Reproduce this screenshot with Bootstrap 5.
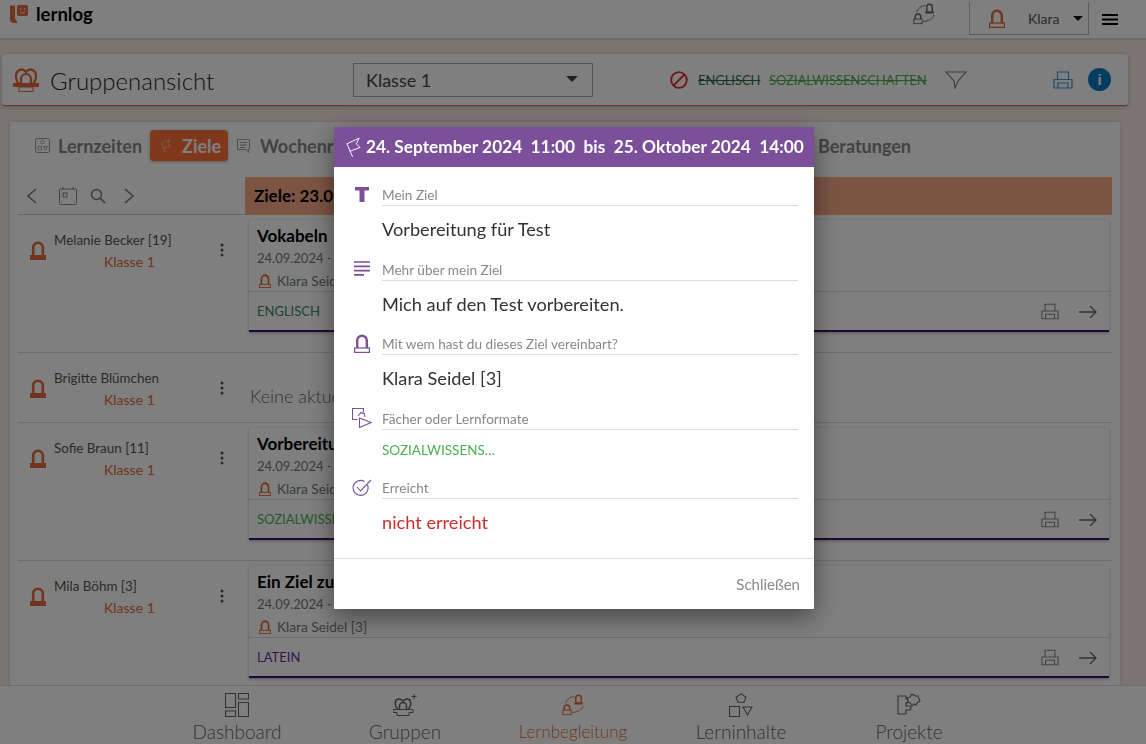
<!DOCTYPE html>
<html lang="de">
<head>
  <meta charset="utf-8">
  <title>lernlog</title>
  <link rel="stylesheet" href="https://cdn.jsdelivr.net/npm/bootstrap@5.3.0/dist/css/bootstrap.min.css">
  <style>
    html, body { height: 100%; overflow: hidden; }
    body { background: #f5e9e5; font-family: "Lato", "Liberation Sans", sans-serif; font-size: 14px; color: #666; }
    svg { display: block; flex: none; }

    .top-bar { height: 40px; background: #fff; border-bottom: 2px solid #d8d8d8; padding: 0 28px 0 10px; }
    .logo-word { font-size: 18.5px; font-weight: 700; color: #000; margin-left: 8px; margin-top: -9px; }
    .logo-mark { color: #e2683a; margin-top: -10px; }
    .user-box { width: 120px; height: 33px; margin: -1px 13px 0 33px; border: 1px solid #bbb; border-top: 0; padding: 0 6px 0 19px; }
    .user-box span { margin-left: 23px; margin-right: 14px; font-size: 14px; color: #555; }
    .tri { width: 0; height: 0; border-left: 5px solid transparent; border-right: 5px solid transparent; border-top: 5px solid #111; }
    .text-orange { color: #e2683a; }

    .head-card { margin: 14px 18px 0 2px; height: 52px; background: #fff; border-bottom: 1px solid #e2683a; border-radius: 3px; box-shadow: 0 1px 4px rgba(0,0,0,.25); padding-left: 11px; }
    .head-title { font-size: 24px; font-weight: 300; color: #222; margin-left: 11px; width: 303px; white-space: nowrap; padding-top: 2px; }
    .sel-box { width: 240px; height: 34px; border: 1px solid #aaa; padding: 2px 14px 0 12px; font-size: 18px; color: #444; margin-right: 77px; }
    .sel-box .tri { border-left-width: 6px; border-right-width: 6px; border-top-width: 6px; border-top-color: #444; margin-top: -3px; }
    .strike-en { color: #2c6b4f; text-decoration: line-through; font-size: 12.9px; margin: 0 9px 0 10px; width: 62px; white-space: nowrap; padding-top: 2px; }
    .strike-so { color: #4caf50; text-decoration: line-through; font-size: 12.9px; margin-right: 19px; width: 157px; white-space: nowrap; padding-top: 2px; }
    .text-blueish { color: #3b9ad6; }
    .info-dot { width: 23px; height: 23px; border-radius: 50%; background: #0a7ac4; color: #fff; font: 700 15px/23px "Liberation Sans", sans-serif; text-align: center; margin-left: 15px; }

    .main-card { margin: 16px 26px 0 10px; background: #fff; padding: 0 8px; box-shadow: 0 0 3px rgba(0,0,0,.15); }
    .tab-line { height: 55px; padding: 8px 0 0 17px; font-size: 18px; font-weight: 700; color: #858585; }
    .tab-line span { padding-top: 2px; }
    .tab-ziele { background: #ff7038; color: #fff; border-radius: 4px; height: 31px; width: 78px; margin: 0 9px 0 8px; padding-left: 11px; box-shadow: 0 1px 3px rgba(0,0,0,.3); }
    .tab-ziele svg { margin-right: 11px; }
    .tab-gap { margin-left: 10px; white-space: nowrap; }
    .tab-last { margin-left: 456px; white-space: nowrap; }

    .left-col { width: 227px; flex: none; }
    .date-tools { height: 38px; border-bottom: 1px solid #ccc; color: #777; padding-left: 8px; }
    .goal-bar { height: 38px; flex: 1; background: #f8a987; color: #000; font-size: 17px; font-weight: 700; padding-left: 9px; }

    .person-line { border-bottom: 1px solid #ddd; }
    .person-side { padding: 15px 0 0 12px; position: relative; }
    .person-icon { margin-top: 11px; }
    .person-side .p-name { font-size: 13.4px; color: #555; margin-left: 8px; white-space: nowrap; }
    .person-side .p-class { font-size: 14px; color: #e2683a; margin: 1px 0 0 58px; }
    .dots { position: absolute; left: 202px; top: 28px; color: #555; }
    .no-goal { font-size: 18px; color: #666; font-weight: 300; padding: 30px 0 0 5px; height: 69px; }

    .goal-card { width: 860px; height: 112px; margin: 5px 0 20px 4px; background: #fff; box-shadow: 0 1px 3px rgba(0,0,0,.3); border-bottom: 2px solid #400f70; }
    .goal-top { height: 72px; padding: 6px 8px 0; border-bottom: 1px solid #ddd; }
    .goal-title { font-size: 17px; font-weight: 700; color: #000; line-height: 20px; white-space: nowrap; }
    .goal-date { font-size: 13px; color: #777; line-height: 20px; margin-top: 2px; white-space: nowrap; }
    .goal-who { font-size: 13.7px; color: #777; line-height: 20px; margin-top: 3px; }
    .goal-who svg { margin: 0 6px 0 2px; color: #e2683a; }
    .goal-foot { height: 38px; padding: 1px 12px 0 8px; font-size: 13px; }
    .sub-en { color: #3a8a6c; }
    .sub-so { color: #4caf50; }
    .sub-la { color: #6a2fa0; }
    .foot-icons { color: #888; gap: 20px; }
    .foot-icons .arrow { color: #666; }

    .bottom-bar { height: 59px; background: #fff; border-top: 1px solid #ddd; overflow: hidden; padding-left: 153px; }
    .bottom-item { width: 168px; color: #666; font-size: 19px; font-weight: 300; padding-top: 7px; line-height: 26px; }
    .bottom-item svg { margin-bottom: 2px; }
    .bottom-item.active { color: #e2683a; font-size: 17px; }

    .goal-dialog { width: 480px; max-width: 480px; margin: 127px 0 0 334px; }
    .goal-content { border: 0; border-radius: 0; box-shadow: 0 8px 24px rgba(0,0,0,.45); height: 482px; }
    .goal-head { background: #7b4f9a; color: #fff; height: 40px; padding: 0 9px 0 12px; font-size: 17.3px; font-weight: 700; white-space: pre; }
    .goal-head svg { margin-right: 5px; }
    .field-wrap { padding: 18px 16px 0 18px; height: 391px; }
    .field { height: 74.5px; }
    .field.short { height: 69px; }
    .field-top { color: #7b4f9a; }
    .field-icon { width: 30px; flex: none; }
    .field-label { flex: 1; font-size: 13.6px; color: #888; border-bottom: 1px solid #ddd; line-height: 20px; height: 21px; }
    .field-value { padding: 10px 0 0 30px; font-size: 18.2px; color: #333; line-height: 26px; }
    .val-green { font-size: 13.5px; color: #4caf50; padding-top: 7px; }
    .val-red { color: #c9302c; }
    .goal-foot-bar { border-top: 1px solid #ddd; height: 51px; padding-right: 14px; color: #888; font-size: 15px; }
  </style>
</head>
<body>
  <svg width="0" height="0" class="position-absolute">
    <symbol id="person" viewBox="0 0 16 19">
      <path d="M3.200 14V6.500a4.800 4.800 0 0 1 9.600 0V14" fill="none" stroke="currentColor" stroke-width="2.600"/>
      <rect x="0" y="14" width="16" height="5" fill="currentColor"/>
    </symbol>
    <symbol id="person-line" viewBox="0 0 16 19">
      <path d="M3.200 14V6.500a4.800 4.800 0 0 1 9.600 0V14" fill="none" stroke="currentColor" stroke-width="2.400"/>
      <rect x=".6" y="14" width="14.800" height="4.400" fill="none" stroke="currentColor" stroke-width="1.200"/>
    </symbol>
    <symbol id="printer" viewBox="0 0 20 18">
      <path d="M4.500 8V1h11v7M1 8.500h18v8.500H1zM5 17v-5h10v5" fill="none" stroke="currentColor" stroke-width="1.200"/>
    </symbol>
    <symbol id="flag" viewBox="0 0 16 22">
      <path d="M7 21 1 7 14 1l-3 6 4 4-11 4" fill="none" stroke="currentColor" stroke-width="1"/>
    </symbol>
    <symbol id="exchange" viewBox="0 0 26 24">
      <path d="M16 9V4.500a3 3 0 0 1 6 0V9" fill="none" stroke="currentColor" stroke-width="1.600"/>
      <rect x="14.500" y="9" width="9" height="2.500" fill="currentColor"/>
      <path d="M3.500 17.500v-2.500a3 3 0 0 1 6 0v2.500" fill="none" stroke="currentColor" stroke-width="1.600"/>
      <rect x="2" y="17.500" width="9" height="5" fill="none" stroke="currentColor"/>
      <path d="M5 10c1-4 5-7 9.500-7M24 13c-1 4-6 7-12 7" fill="none" stroke="currentColor"/>
    </symbol>
  </svg>

  <header class="top-bar d-flex align-items-center">
    <svg class="logo-mark" width="18" height="18" viewBox="0 0 18 18">
      <path d="M0 .5h5V13q0 2 2 3v2H4q-4 0-4-4z" fill="currentColor"/>
      <rect x="7" y="0" width="11" height="11" rx="2" fill="currentColor"/>
      <circle cx="10.500" cy="4" r=".8" fill="#fff"/><circle cx="14.500" cy="4" r=".8" fill="#fff"/>
      <path d="M10 7q2.500 2 5 0" fill="none" stroke="#fff" stroke-width=".8"/>
    </svg>
    <div class="logo-word">lernlog</div>
    <div class="ms-auto d-flex align-items-center">
      <svg width="24" height="24" style="color:#666;margin-top:-10px"><use href="#exchange"/></svg>
      <div class="user-box d-flex align-items-center">
        <svg class="text-orange" width="16" height="19"><use href="#person-line"/></svg>
        <span>Klara</span>
        <div class="tri"></div>
      </div>
      <svg width="16" height="11" viewBox="0 0 16 11"><path d="M0 1h16M0 5.500h16M0 10h16" stroke="#000" stroke-width="2"/></svg>
    </div>
  </header>

  <section class="head-card d-flex align-items-center">
    <svg class="text-orange" width="26" height="25" viewBox="0 0 26 25">
      <path d="M6.500 17C2 14 2 6 5.500 3.500 8 2 11 2.500 13 5c2-2.500 5-3 7.500-1.500C24 6 24 14 19.500 17" fill="none" stroke="currentColor" stroke-width="2.200"/>
      <path d="M8 16v-4a5 5 0 0 1 10 0v4" fill="none" stroke="currentColor" stroke-width="2.200"/>
      <rect x="0" y="16" width="26" height="4" fill="currentColor"/>
      <rect x="6" y="20" width="14" height="4.500" fill="none" stroke="currentColor"/>
    </svg>
    <div class="head-title">Gruppenansicht</div>
    <div class="sel-box d-flex align-items-center justify-content-between"><span>Klasse 1</span><div class="tri"></div></div>
    <svg width="18" height="18" viewBox="0 0 18 18" style="color:#e02b2b"><circle cx="9" cy="9" r="7.800" fill="none" stroke="currentColor" stroke-width="1.800"/><path d="M14.500 3.500l-11 11" stroke="currentColor" stroke-width="1.800"/></svg>
    <div class="strike-en">ENGLISCH</div>
    <div class="strike-so">SOZIALWISSENSCHAFTEN</div>
    <svg width="22" height="18" viewBox="0 0 22 18" style="color:#777"><path d="M1 1h20l-8 9-3 7-1-7z" fill="none" stroke="currentColor" stroke-width="1.100"/></svg>
    <svg class="text-blueish" style="margin-left:86px" width="20" height="18"><use href="#printer"/></svg>
    <div class="info-dot">i</div>
  </section>

  <main class="main-card">
    <div class="tab-line d-flex align-items-start">
      <div class="d-flex align-items-center" style="height:31px">
        <svg width="15" height="15" viewBox="0 0 15 15" style="color:#999;margin-right:8px"><rect x=".5" y=".5" width="14" height="14" rx="2" fill="none" stroke="currentColor"/><circle cx="7.500" cy="4" r="1.800" fill="none" stroke="currentColor" stroke-width=".8"/><rect x="3" y="8.500" width="3.500" height="3.500" fill="none" stroke="currentColor" stroke-width=".8"/><path d="M8.500 8.500h4l-2 3.500z" fill="none" stroke="currentColor" stroke-width=".8"/></svg>
        <span>Lernzeiten</span>
      </div>
      <div class="tab-ziele d-flex align-items-center">
        <svg width="10" height="14" style="color:#e8e8e8"><use href="#flag"/></svg>
        <span>Ziele</span>
      </div>
      <div class="d-flex align-items-center" style="height:31px">
        <svg width="13" height="14" viewBox="0 0 13 14" style="color:#999"><path d="M.5.500h12v10h-1.500l1 3-3-3H.500zM3 3.500h7M3 6h7M3 8.500h5" fill="none" stroke="currentColor" stroke-width=".9"/></svg>
        <span class="tab-gap">Wochenrück</span>
        <span class="tab-last">Beratungen</span>
      </div>
    </div>

    <div class="d-flex">
      <div class="left-col date-tools d-flex align-items-center">
        <svg width="12" height="16" viewBox="0 0 12 16"><path d="M10 1 2 8l8 7" fill="none" stroke="currentColor" stroke-width="1.600"/></svg>
        <svg width="18" height="18" viewBox="0 0 18 18" style="margin-left:21px;color:#888"><rect x=".5" y="2" width="17" height="15.500" rx="1" fill="none" stroke="currentColor"/><path d="M4 0v3M14 0v3" stroke="currentColor"/><rect x="4" y="6" width="4" height="4" fill="none" stroke="currentColor"/></svg>
        <svg width="16" height="16" viewBox="0 0 16 16" style="margin-left:13px"><circle cx="6.500" cy="6.500" r="5" fill="none" stroke="currentColor" stroke-width="1.400"/><path d="m10 10 5 5" stroke="currentColor" stroke-width="1.600"/></svg>
        <svg width="12" height="16" viewBox="0 0 12 16" style="margin-left:17px"><path d="m2 1 8 7-8 7" fill="none" stroke="currentColor" stroke-width="1.600"/></svg>
      </div>
      <div class="goal-bar d-flex align-items-center">Ziele: 23.09.</div>
    </div>

    <div id="rows"></div>
  </main>

  <nav class="bottom-bar fixed-bottom d-flex">
    <div class="bottom-item text-center d-flex flex-column align-items-center">
      <svg width="24" height="24" viewBox="0 0 24 24"><path d="M.5.500h10v14H.500zM.5 18h10v5.500H.500zM13.500.500h10V6h-10zM13.500 9.500h10v14h-10z" fill="none" stroke="currentColor" stroke-width="1.100"/></svg>
      Dashboard
    </div>
    <div class="bottom-item text-center d-flex flex-column align-items-center">
      <svg width="24" height="24" viewBox="0 0 24 24"><path d="M5 16C1.500 14 1.500 8 4 6.500c2-1 4-.5 6 1.500 2-2 4-2.500 6-1.500 2.500 1.500 2.500 7.500-1 9.500" fill="none" stroke="currentColor" stroke-width="1.500"/><path d="M6.500 16v-3a3.500 3.500 0 0 1 7 0v3" fill="none" stroke="currentColor" stroke-width="1.500"/><path d="M0 16.500h20v3h-4v3H4v-3H0zM21 1v5M18.500 3.500h5" fill="none" stroke="currentColor"/></svg>
      Gruppen
    </div>
    <div class="bottom-item active text-center d-flex flex-column align-items-center">
      <svg width="24" height="24"><use href="#exchange"/></svg>
      Lernbegleitung
    </div>
    <div class="bottom-item text-center d-flex flex-column align-items-center">
      <svg width="24" height="24" viewBox="0 0 24 24"><path d="m12 .800 5 3.500-2 5H9l-2-5zM.500 13.500h10v10H.500zM14 14h9l-4.500 8z" fill="none" stroke="currentColor" stroke-width="1.100"/></svg>
      Lerninhalte
    </div>
    <div class="bottom-item text-center d-flex flex-column align-items-center">
      <svg width="24" height="24" viewBox="0 0 24 24"><path d="M1 3h8v3a2 2 0 0 1 0 4v3h3a2 2 0 0 1 0 4H9v4H1zM13 10l-2-1 0-2-1-2 3-1 2-3 3 2 3 0 1 3 1 2-3 2-1 2-2-1-2 2z" fill="none" stroke="currentColor" stroke-width="1.100"/></svg>
      Projekte
    </div>
  </nav>

  <div class="modal-backdrop fade show"></div>
  <div class="modal fade show d-block" tabindex="-1">
    <div class="modal-dialog goal-dialog">
      <div class="modal-content goal-content">
        <div class="goal-head d-flex align-items-center">
          <svg width="15" height="21"><use href="#flag"/></svg>
          <span>24. September 2024  11:00  bis  25. Oktober 2024  14:00</span>
        </div>
        <div class="field-wrap">
          <div class="field">
            <div class="field-top d-flex">
              <div class="field-icon"><svg width="14" height="15" viewBox="0 0 14 15" style="margin:2px 0 0 3px"><path d="M0 0h14v3.500H9.500V15h-5V3.500H0z" fill="currentColor"/></svg></div>
              <div class="field-label">Mein Ziel</div>
            </div>
            <div class="field-value">Vorbereitung für Test</div>
          </div>
          <div class="field">
            <div class="field-top d-flex">
              <div class="field-icon"><svg width="16" height="15" viewBox="0 0 16 15" style="margin:1px 0 0 2px"><path d="M0 1h16M0 5.300h16M0 9.600h16M0 13.900h10" stroke="currentColor" stroke-width="1.700"/></svg></div>
              <div class="field-label">Mehr über mein Ziel</div>
            </div>
            <div class="field-value">Mich auf den Test vorbereiten.</div>
          </div>
          <div class="field">
            <div class="field-top d-flex">
              <div class="field-icon"><svg width="16" height="19" style="margin-left:2px"><use href="#person-line"/></svg></div>
              <div class="field-label">Mit wem hast du dieses Ziel vereinbart?</div>
            </div>
            <div class="field-value">Klara Seidel [3]</div>
          </div>
          <div class="field short">
            <div class="field-top d-flex">
              <div class="field-icon"><svg width="20" height="20" viewBox="0 0 20 20" style="margin-top:-1px"><path d="M5.500 11.500H.5V.500h11v4M6 8l3-3.500 3.500 1.500L13 9M7.500 10 19 14.500 7.500 19.500z" fill="none" stroke="currentColor" stroke-width="1.100"/></svg></div>
              <div class="field-label">Fächer oder Lernformate</div>
            </div>
            <div class="field-value val-green">SOZIALWISSENS…</div>
          </div>
          <div class="field">
            <div class="field-top d-flex">
              <div class="field-icon"><svg width="20" height="19" viewBox="0 0 20 19" style="margin-top:1px"><path d="M15.500 6a7.500 7.500 0 1 1-3-3.500M5 8l3.500 4L19 1" fill="none" stroke="currentColor" stroke-width="1.100"/></svg></div>
              <div class="field-label">Erreicht</div>
            </div>
            <div class="field-value val-red">nicht erreicht</div>
          </div>
        </div>
        <div class="goal-foot-bar d-flex align-items-center justify-content-end">Schließen</div>
      </div>
    </div>
  </div>

  <script>
    const people = [
      { name: "Melanie Becker [19]", title: "Vokabeln", sub: "ENGLISCH", cls: "sub-en" },
      { name: "Brigitte Blümchen" },
      { name: "Sofie Braun [11]", title: "Vorbereitung", sub: "SOZIALWISSENS…", cls: "sub-so" },
      { name: "Mila Böhm [3]", title: "Ein Ziel zum", sub: "LATEIN", cls: "sub-la" }
    ];

    const dots = `<svg class="dots" width="4" height="14" viewBox="0 0 4 14"><circle cx="2" cy="2" r="1.500" fill="currentColor"/><circle cx="2" cy="7" r="1.500" fill="currentColor"/><circle cx="2" cy="12" r="1.500" fill="currentColor"/></svg>`;

    function goalCard(p) {
      return `
        <div class="goal-card">
          <div class="goal-top">
            <div class="goal-title">${p.title}</div>
            <div class="goal-date">24.09.2024 - 25.10.2024</div>
            <div class="goal-who d-flex align-items-center"><svg width="12" height="14"><use href="#person-line"/></svg>Klara Seidel [3]</div>
          </div>
          <div class="goal-foot d-flex align-items-center justify-content-between">
            <span class="${p.cls}">${p.sub}</span>
            <div class="foot-icons d-flex align-items-center">
              <svg width="18" height="17"><use href="#printer"/></svg>
              <svg class="arrow" width="18" height="14" viewBox="0 0 18 14"><path d="M0 7h17M11 1l6 6-6 6" fill="none" stroke="currentColor" stroke-width="1.300"/></svg>
            </div>
          </div>
        </div>`;
    }

    document.getElementById("rows").innerHTML = people.map(p => `
      <div class="person-line d-flex">
        <div class="left-col person-side d-flex">
          <svg class="person-icon text-orange" width="16" height="19"><use href="#person"/></svg>
          <div>
            <div class="p-name">${p.name}</div>
            <div class="p-class">Klasse 1</div>
          </div>
          ${dots}
        </div>
        <div class="flex-fill">${p.title ? goalCard(p) : `<div class="no-goal">Keine aktuellen Ziele</div>`}</div>
      </div>`).join("");
  </script>
</body>
</html>
